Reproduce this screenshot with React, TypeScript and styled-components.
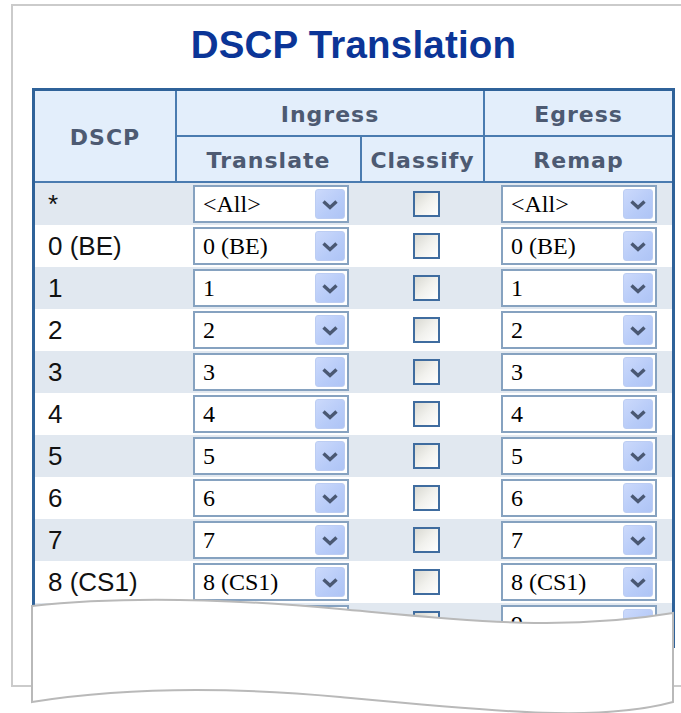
import styled, { createGlobalStyle } from "styled-components";

const GlobalStyle = createGlobalStyle`
    html, body {
        margin: 0;
        padding: 0;
        background: #ffffff;
        overflow: hidden;
    }
`

// rows below "9" are hidden by the torn edge anyway
const rows = ["0 (BE)", "1", "2", "3", "4", "5", "6", "7", "8 (CS1)", "9"]

const SelectBox = ({value}: { value: string }) => {
    return (
        <Select>
            <SelectText>{value}</SelectText>
            <DropButton>
                <svg width="18" height="11" viewBox="0 0 18 11">
                    <path d="M2.5 2.5 L9 8.5 L15.5 2.5" fill="none" stroke="#4a5873" strokeWidth="3.4"/>
                </svg>
            </DropButton>
        </Select>
    );
};

const DataRow = ({label, value, odd}: { label: string, value: string, odd: boolean }) => {
    return (
        <Row $odd={odd}>
            <LabelCell>{label}</LabelCell>
            <SelectCell><SelectBox value={value}/></SelectCell>
            <CheckCell><CheckBox/></CheckCell>
            <SelectCell><SelectBox value={value}/></SelectCell>
        </Row>
    );
};

export default function App() {
    return (
        <>
            <GlobalStyle/>
            <Frame>
                <Title>DSCP Translation</Title>
                <Table>
                    <colgroup>
                        <col style={{width: 142}}/>
                        <col style={{width: 185}}/>
                        <col style={{width: 123}}/>
                        <col style={{width: 187}}/>
                    </colgroup>
                    <thead>
                    <tr>
                        <Head rowSpan={2} $right>DSCP</Head>
                        <Head colSpan={2} $right>Ingress</Head>
                        <Head>Egress</Head>
                    </tr>
                    <tr>
                        <Head $right>Translate</Head>
                        <Head $right>Classify</Head>
                        <Head>Remap</Head>
                    </tr>
                    </thead>
                    <tbody>
                    <DataRow label="*" value="<All>" odd={true}/>
                    {rows.map((r, i) => (
                        <DataRow key={r} label={r} value={r} odd={i % 2 === 1}/>
                    ))}
                    </tbody>
                </Table>
            </Frame>
            {/* torn paper edge over the bottom of the page */}
            <Torn width="681" height="713" viewBox="0 0 681 713">
                <path
                    d="M32,606 C120,596 220,598 340,609 S560,632 673,613 L673,702 C600,722 500,712 340,697 C220,686 120,688 32,702 Z"
                    fill="#ffffff" stroke="#b9b9b9" strokeWidth="2"/>
            </Torn>
        </>
    );
}

const Frame = styled.div`
    margin: 4px 0 0 11px;
    width: 649px;
    height: 679px;
    border: 2px solid #cbcbcb;
    border-right: none;
    padding: 0 0 0 19px;
    box-sizing: content-box;
    overflow: hidden;
`

const Title = styled.div`
    width: 643px;
    height: 82px;
    padding-top: 18px;
    box-sizing: border-box;
    text-align: center;
    font-family: "Liberation Sans", Arial, sans-serif;
    font-weight: bold;
    font-size: 38.5px;
    line-height: 42px;
    letter-spacing: 0.2px;
    color: #0b3597;
`

const Table = styled.table`
    width: 643px;
    table-layout: fixed;
    border-collapse: separate;
    border-spacing: 0;
    border: 3px solid #2f6299;
`

const Head = styled.th<{ $right?: boolean }>`
    height: 41px;
    padding: 3px 0 0 0;
    background: #e3eefb;
    border-bottom: 2px solid #4a7bb0;
    border-right: ${props => props.$right ? "2px solid #4a7bb0" : "none"};
    font-family: "DejaVu Sans", Verdana, sans-serif;
    font-weight: bold;
    font-size: 22px;
    letter-spacing: 1px;
    color: #4d5a72;
    text-align: center;
    vertical-align: middle;
`

const Row = styled.tr<{ $odd: boolean }>`
    height: 42px;
    background: ${props => props.$odd ? "#e1e8f0" : "#ffffff"};
`

const LabelCell = styled.td`
    padding: 0 0 0 13px;
    font-family: "Liberation Sans", Arial, sans-serif;
    font-size: 26px;
    color: #111111;
    vertical-align: middle;
`

const SelectCell = styled.td`
    padding: 0 0 0 16px;
    vertical-align: middle;
`

const CheckCell = styled.td`
    padding: 0;
    text-align: center;
    vertical-align: middle;
`

const Select = styled.div`
    display: flex;
    align-items: center;
    justify-content: space-between;
    width: 156px;
    height: 38px;
    box-sizing: border-box;
    border: 2px solid #86a2c0;
    background: #ffffff;
    padding: 0 2px 0 8px;
`

const SelectText = styled.span`
    font-family: "Liberation Serif", "Times New Roman", serif;
    font-size: 24px;
    color: #000000;
    white-space: nowrap;
`

const DropButton = styled.span`
    display: flex;
    align-items: center;
    justify-content: center;
    width: 30px;
    height: 30px;
    box-sizing: border-box;
    border: 1px solid #bccdf3;
    border-radius: 3px;
    background: linear-gradient(135deg, #cbd9fb 0%, #b7cbf8 60%, #aec4f5 100%);
`

const CheckBox = styled.span`
    display: inline-block;
    width: 27px;
    height: 26px;
    box-sizing: border-box;
    border: 2px solid #3f6c9f;
    background: linear-gradient(135deg, #d9d9d2 0%, #f1f1ed 50%, #ffffff 100%);
    vertical-align: middle;
    margin-left: 6px;
`

const Torn = styled.svg`
    position: absolute;
    left: 0;
    top: 0;
`
